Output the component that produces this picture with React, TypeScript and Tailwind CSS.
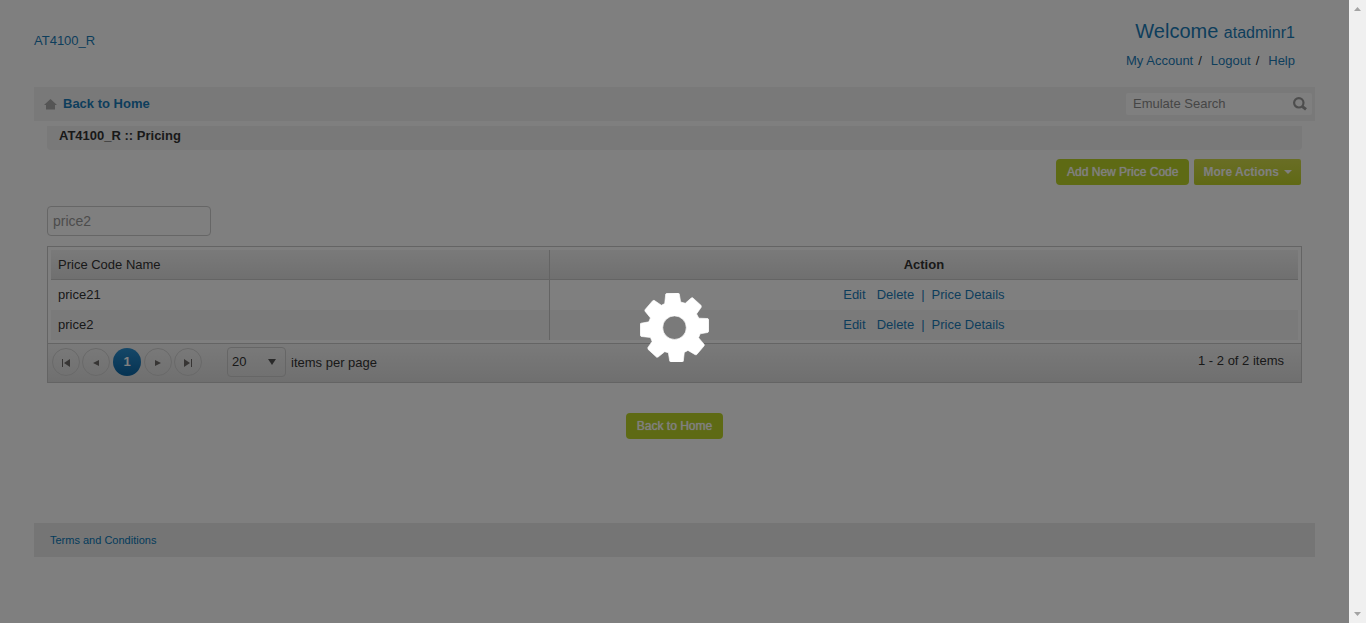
import React from "react";

const rows = ["price21", "price2"];

function Gear() {
  return (
    <svg className="h-[69px] w-[69px]" viewBox="330 158 207 208" role="img" aria-label="Loading">
      <path
        fill="#fff"
        stroke="#fff"
        strokeWidth="2"
        strokeLinejoin="round"
        fillRule="evenodd"
        d="M407 161L410 159L445 158L448 161L452 185L466 189L484 173L488 172L514 196L514 201L500 221L507 234L534 235L537 238L537 274L534 277L511 281L506 293L523 313L523 317L500 344L496 344L474 331L463 337L460 364L457 366L422 366L419 363L415 338L404 335L384 351L380 352L354 328L353 323L366 304L361 292L333 289L330 286L330 251L333 249L356 245L361 233L344 212L345 208L368 181L372 180L394 195L404 190ZM433.5 227A35.5 35.5 0 1 0 433.5 298A35.5 35.5 0 1 0 433.5 227Z"
      />
    </svg>
  );
}

function PagerButton({ label, path }: { label: string; path: string }) {
  return (
    <button
      type="button"
      aria-label={label}
      className="flex h-7 w-7 items-center justify-center rounded-full border border-[#d2d2d2] pt-px"
    >
      <svg className="h-2 w-2" viewBox="0 0 8 8" fill="#6e6a68" aria-hidden="true">
        <path d={path} />
      </svg>
    </button>
  );
}

function Page() {
  return (
    <div className="px-[34px] text-[13px] leading-5 text-[#333]">
      <header className="flex h-[87px] justify-between pt-[19px] pr-5">
        <a href="#" className="self-start pt-3 text-[#1b7cb9]">AT4100_R</a>
        <div className="text-right">
          <div className="text-xl leading-6 text-[#1b7cb9]">
            Welcome <span className="text-base">atadminr1</span>
          </div>
          <nav className="mt-[6px] flex justify-end gap-[9px]">
            <span className="flex gap-[5px]"><a href="#" className="text-[#1b7cb9]">My Account</a><span>/</span></span>
            <span className="flex gap-[5px]"><a href="#" className="text-[#1b7cb9]">Logout</a><span>/</span></span>
            <a href="#" className="text-[#1b7cb9]">Help</a>
          </nav>
        </div>
      </header>

      <div className="flex h-[34px] items-center justify-between bg-[#f2f2f2] pr-[3px] pl-[10px]">
        <a href="#" className="flex items-center gap-[6px] font-bold text-[#1b7cb9]">
          <svg className="h-[11px] w-[13px]" viewBox="0 0 13 11" fill="#aaa" aria-hidden="true">
            <path d="M6.5 0L13 6H11V10.5H2V6H0Z" />
          </svg>
          Back to Home
        </a>
        <div className="flex h-[22px] w-[186px] items-center rounded-xs bg-white pr-[5px] pl-[7px]">
          <input
            type="text"
            aria-label="Emulate Search"
            placeholder="Emulate Search"
            className="min-w-0 flex-1 outline-none placeholder:text-[#8c8c8c]"
          />
          <button type="button" aria-label="Search">
            <svg className="h-[14px] w-[14px]" viewBox="0 0 14 14" fill="none" stroke="#9b9b9b" aria-hidden="true">
              <circle cx="5.8" cy="5.8" r="4.7" strokeWidth="2.2" />
              <path d="M9.2 9.4L13 12.4" strokeWidth="3" />
            </svg>
          </button>
        </div>
      </div>

      <main className="px-[13px] pt-[5px]">
        <h1 className="h-6 rounded-b bg-[#f2f2f2] px-3 font-bold">AT4100_R :: Pricing</h1>

        <div className="mt-[9px] flex justify-end gap-[5px] pr-px text-xs">
          <button type="button" className="h-[26px] rounded bg-[#bdd528] px-[11px] text-white text-shadow-[0_0_1px_#fff]">
            Add New Price Code
          </button>
          <button type="button" className="flex h-[26px] items-center gap-[5px] rounded-xs bg-linear-to-b from-[#d3dc4a] to-[#c0d228] px-[9px] font-bold text-white">
            More Actions
            <svg className="h-1 w-2" viewBox="0 0 8 4" fill="#fff" aria-hidden="true"><path d="M0 0H8L4 4Z" /></svg>
          </button>
        </div>

        <input
          type="text"
          aria-label="Filter price codes"
          placeholder="price2"
          className="mt-[21px] block h-[30px] w-[164px] rounded border border-[#ccc] px-[5px] text-sm outline-none placeholder:text-[#999]"
        />

        <section className="mt-[10px] border border-[#c9c9c9]">
          <div className="p-[3px]">
            <table className="w-full table-fixed border-separate border-spacing-0">
              <colgroup><col className="w-[40%]" /><col className="w-[60%]" /></colgroup>
              <thead>
                <tr className="h-[30px] bg-linear-to-b from-[#f4f4f4] to-[#dfdfdf]">
                  <th className="border-r border-b border-[#c9c9c9] px-[7px] text-left font-normal">Price Code Name</th>
                  <th className="border-b border-[#c9c9c9] font-bold">Action</th>
                </tr>
              </thead>
              <tbody>
                {rows.map((name) => (
                  <tr key={name} className="h-[30px] even:bg-[#f5f5f5]">
                    <td className="border-r border-[#c9c9c9] px-[7px]">{name}</td>
                    <td>
                      <div className="flex justify-center text-[#1b7cb9]">
                        <a href="#" className="mr-[11px]">Edit</a>
                        <a href="#">Delete</a>
                        <span className="mx-[7px]">|</span>
                        <a href="#">Price Details</a>
                      </div>
                    </td>
                  </tr>
                ))}
              </tbody>
            </table>
          </div>
          <div className="flex h-[39px] items-center border-t border-[#c9c9c9] bg-linear-to-b from-[#f4f4f4] to-[#dfdfdf] pr-[17px] pb-[2px] pl-1">
            <div className="flex gap-[2px]">
              <PagerButton label="First page" path="M0 0H1V8H0ZM8 0V8L2 4Z" />
              <PagerButton label="Previous page" path="M7 1V7L1 4Z" />
              <button type="button" className="mx-px h-7 w-7 rounded-full bg-linear-to-b from-[#2a8fd0] to-[#0a66a5] font-bold text-white">1</button>
              <PagerButton label="Next page" path="M1 1V7L7 4Z" />
              <PagerButton label="Last page" path="M0 0V8L6 4ZM7 0H8V8H7Z" />
            </div>
            <label className="ml-[25px] flex items-center gap-[5px]">
              <span className="grid items-center">
                <select className="col-start-1 row-start-1 h-[30px] w-[59px] appearance-none rounded border border-[#ccc] pl-1">
                  <option>20</option>
                </select>
                <svg className="pointer-events-none col-start-1 row-start-1 mr-[10px] h-[6px] w-2 justify-self-end" viewBox="0 0 8 6" fill="#555" aria-hidden="true">
                  <path d="M0 0H8L4 6Z" />
                </svg>
              </span>
              <span className="pt-[2px]">items per page</span>
            </label>
            <span className="ml-auto pb-[2px]">1 - 2 of 2 items</span>
          </div>
        </section>

        <div className="mt-[30px] flex justify-center">
          <button type="button" className="h-[26px] rounded bg-[#bdd528] px-[11px] text-xs text-white text-shadow-[0_0_1px_#fff]">
            Back to Home
          </button>
        </div>
      </main>

      <footer className="mt-[84px] flex h-[34px] items-center bg-[#eaeaea] px-4 text-[11px]">
        <a href="#" className="text-[#0878b8]">Terms and Conditions</a>
      </footer>
    </div>
  );
}

export default function App() {
  return (
    <div className="flex min-h-screen font-['Liberation_Sans',Arial,sans-serif]">
      <div className="relative min-w-0 flex-1 bg-white">
        <Page />
        <div className="absolute inset-0 flex items-center justify-center bg-black/50 pt-8">
          <Gear />
        </div>
      </div>
      <div className="flex w-[17px] flex-col items-center justify-between bg-[#f0f0f0] pt-[7px] pb-[7px]" aria-hidden="true">
        <svg className="h-1 w-[7px]" viewBox="0 0 7 4" fill="#a3a3a3"><path d="M3.5 0L7 4H0Z" /></svg>
        <svg className="h-1 w-[7px]" viewBox="0 0 7 4" fill="#a3a3a3"><path d="M0 0H7L3.5 4Z" /></svg>
      </div>
    </div>
  );
}
